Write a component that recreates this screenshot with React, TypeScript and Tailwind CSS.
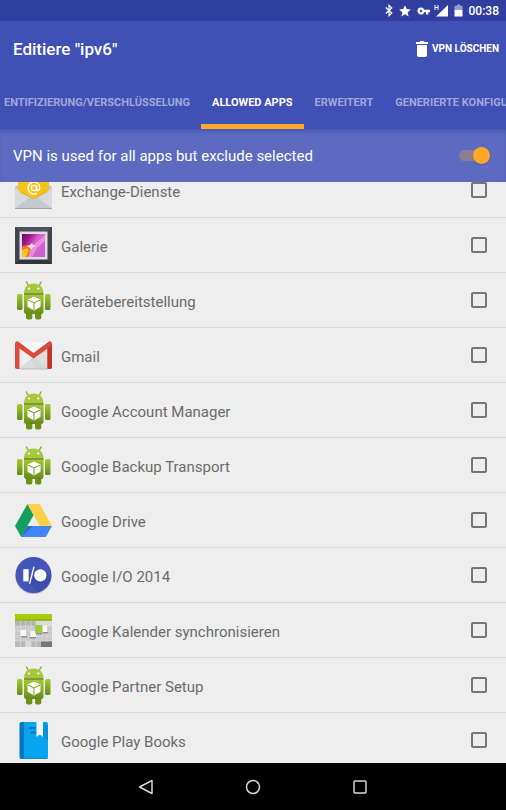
import type { ReactNode } from "react";
import clsx from "clsx";

function MailIcon() {
  return (
    <svg viewBox="0 0 37 37" className="size-[37px]">
      <path d="M0 15L18.500 3 37 15v20H0z" fill="#c3c4cc" />
      <path d="M0 16l18.500 11L37 16v20.500H0z" fill="#d9d9e0" />
      <path d="M3 6h31v12.500L18.500 27 3 18.500z" fill="#fbc219" />
      <path d="M5 19.600l13.500 7.400L32 19.600" fill="none" stroke="#e8a90c" />
      <circle cx="19" cy="16" r="2.600" fill="none" stroke="#fff" strokeWidth="1.400" />
      <path d="M21.700 13.500v3.600c0 2.400 3 1.500 3-1.600 0-3.600-2.700-5.400-5.700-5.400a6 6 0 1 0 3 11.200" fill="none" stroke="#fff" strokeWidth="1.400" />
      <path d="M0 36.500L15 25l3.500 2.500L22 25l15 11.500z" fill="#c6c7d1" />
      <path d="M0 36h37v1H0z" fill="#a4a5ae" />
    </svg>
  );
}

function GalleryIcon() {
  return (
    <svg viewBox="0 0 37 37" className="size-[37px]">
      <defs>
        <linearGradient id="photo" x1="0" y1="0" x2="1" y2=".6">
          <stop offset="0" stopColor="#5f0a6b" />
          <stop offset=".3" stopColor="#a3198c" />
          <stop offset=".6" stopColor="#dc62cf" />
          <stop offset="1" stopColor="#c961cd" />
        </linearGradient>
      </defs>
      <path d="M0 0h37v37H0z" fill="#42444d" />
      <path d="M0 0h37l-4 4H4z" fill="#50525b" />
      <path d="M0 37h37l-4-4H4z" fill="#34363d" />
      <path d="M4.500 4.500h28v28h-28z" fill="#dedee0" />
      <path d="M7 7h23v23H7z" fill="url(#photo)" />
      <path d="M12 30l2-8 7-6 9-8v6l-8 7-5 9z" fill="#f29ae6" opacity=".75" />
      <path d="M7 19l7-1 2 4-3 8H7z" fill="#f4702a" />
      <path d="M7 23l5-2 2 2-3 7H7z" fill="#ffc021" />
      <path d="M12 19l3-1 2-2 1 2 4 1-4 1-2 3-1-2z" fill="#ffe4d5" />
    </svg>
  );
}

function AndroidIcon() {
  return (
    <svg viewBox="0 0 37 40" className="h-10 w-[37px]">
      <defs>
        <linearGradient id="droid" x1="0" y1="0" x2="0" y2="1">
          <stop offset="0" stopColor="#a6c832" />
          <stop offset=".5" stopColor="#86ac26" />
          <stop offset="1" stopColor="#658a1c" />
        </linearGradient>
      </defs>
      <path d="M13 5l-1.500-3M24.500 5L26 2" stroke="#8aae29" strokeWidth="1.400" strokeLinecap="round" />
      <path d="M9 13.500C9 7 13 3.500 18.700 3.500s9.800 3.500 9.800 10z" fill="#a6c83a" />
      <circle cx="14" cy="8.500" r="1.100" fill="#fff" />
      <circle cx="23.300" cy="8.500" r="1.100" fill="#fff" />
      <rect x="2" y="14" width="5.500" height="16" rx="1.500" fill="url(#droid)" />
      <rect x="30" y="14" width="5.500" height="16" rx="1.500" fill="url(#droid)" />
      <rect x="11" y="29" width="6.300" height="10.500" rx="2" fill="#6d9116" />
      <rect x="20" y="29" width="6.300" height="10.500" rx="2" fill="#6d9116" />
      <path d="M9 14.500h19.500v17.200a2.300 2.300 0 0 1-2.300 2.300H11.300A2.300 2.300 0 0 1 9 31.700z" fill="url(#droid)" />
      <path d="M9 14h19.500" stroke="#4c6b0c" strokeWidth="1.200" />
      <path d="M19 16.500l6.500 3v7.200L19 30.500l-6.500-3.800v-7.200z" fill="#fff" />
      <path d="M13 20l6 3 6-3M19 23v7" fill="none" stroke="#84a62b" strokeWidth="1.100" />
    </svg>
  );
}

function GmailIcon() {
  return (
    <svg viewBox="0 0 37 29" className="h-[29px] w-[37px]">
      <path d="M2 1h33v27H2z" fill="#eeeeee" />
      <path d="M4 28l14.500-13L33 28z" fill="#dcdcdc" />
      <path d="M4 1h29L18.500 13z" fill="#f7f7f7" />
      <path d="M33 5v23H20L16 15z" fill="#d2d2d2" opacity=".6" />
      <path d="M0 3C0 1 1.500 0 3 .500L18.500 12 34 .500c1.500-.5 3 .5 3 2.500v23a2 2 0 0 1-2 2h-2.500V7.500L18.500 17.500 4.500 7.500V28H2a2 2 0 0 1-2-2z" fill="#dc4a3e" />
      <path d="M32.500 7.500L37 3v23a2 2 0 0 1-2 2h-2.500z" fill="#c2352b" />
      <path d="M4.500 28h28" stroke="#b9b9b9" />
    </svg>
  );
}

function DriveIcon() {
  return (
    <svg viewBox="0 0 37 33" className="h-[33px] w-[37px]">
      <path d="M12.500 0L0 22l6.200 11L18.700 11z" fill="#159f5c" />
      <path d="M12.500 0h12.200L37 22H24.800z" fill="#ffd046" />
      <path d="M12.500 22H37l-6.200 11H6.200z" fill="#4285f4" />
      <path d="M12.500 22L6.200 33 18 22z" fill="#316bd0" />
    </svg>
  );
}

function IoIcon() {
  return (
    <svg viewBox="0 0 38 39" className="h-[39px] w-[38px]">
      <circle cx="19" cy="20" r="18.500" fill="#b9b9bd" />
      <circle cx="19" cy="19" r="18.500" fill="#4355b9" />
      <path d="M14 25l10 12 9-6 4-10-6-6z" fill="#3d4dac" />
      <path d="M8.500 13H14v12.500H8.500z" fill="#fff" />
      <circle cx="26" cy="19.300" r="6.300" fill="#fff" />
      <path d="M19.500 10.500L15 28" stroke="#fff" strokeWidth="1.300" />
    </svg>
  );
}

function CalendarIcon() {
  return (
    <svg viewBox="0 0 37 33" className="h-[33px] w-[37px]">
      <path d="M0 0h37v33H0z" fill="#cacaca" />
      <path d="M0 7h37v5H0z" fill="#b2b2b2" />
      <path d="M21 7h16v5H21z" fill="#dcdcdc" />
      <path d="M0 27h37v6H0z" fill="#bababa" />
      <path d="M11 27h5v6h-5z" fill="#dadada" />
      <path d="M5.500 7v26M10.500 7v26M16 7v26M21 7v26M26.500 7v26M32 7v26M0 12h37M0 17h37M0 22h37M0 27h37" stroke="#dedede" strokeWidth=".6" />
      <path d="M26 27.500h11V33H26z" fill="#757575" />
      <path d="M0 0h37v6.500H0z" fill="#a9cb0f" />
      <path d="M0 5.500h37v1H0z" fill="#86a40a" />
      <path d="M6 22h6v1.500H6zM15 23h6v1.500h-6zM28 18h5v1.500h-5zM20 19h7v1.500h-7z" fill="#777" opacity=".7" />
      <path d="M5.500 16H11v6H5.500zM15.500 17H21v6h-5.500zM27 11.500h5V18h-5z" fill="#f8f8f8" />
      <path d="M20 11h7.500v8H20z" fill="#9fcb3f" />
    </svg>
  );
}

function BookIcon() {
  return (
    <svg viewBox="0 0 37 37" className="size-[37px]">
      <path d="M4.500 2a2 2 0 0 1 2-2H9v36.500H6.500a2 2 0 0 1-2-2z" fill="#0277bd" />
      <path d="M9 0h22.500A1.500 1.500 0 0 1 33 1.500V35a1.500 1.500 0 0 1-1.500 1.500H9z" fill="#08a4ef" />
      <path d="M14 6h7M16 10.500h5" stroke="#0277bd" strokeWidth="2" />
      <path d="M28 14l5 5V4l-5-4z" fill="#0693dc" />
      <path d="M21.500 0H28v15l-3.200-2.500-3.300 2.500z" fill="#f4f4f4" />
      <path d="M5 36.300h27.500" stroke="#0277bd" />
    </svg>
  );
}

const apps: { name: string; icon: ReactNode }[] = [
  { name: "Exchange-Dienste", icon: <MailIcon /> },
  { name: "Galerie", icon: <GalleryIcon /> },
  { name: "Gerätebereitstellung", icon: <AndroidIcon /> },
  { name: "Gmail", icon: <GmailIcon /> },
  { name: "Google Account Manager", icon: <AndroidIcon /> },
  { name: "Google Backup Transport", icon: <AndroidIcon /> },
  { name: "Google Drive", icon: <DriveIcon /> },
  { name: "Google I/O 2014", icon: <IoIcon /> },
  { name: "Google Kalender synchronisieren", icon: <CalendarIcon /> },
  { name: "Google Partner Setup", icon: <AndroidIcon /> },
  { name: "Google Play Books", icon: <BookIcon /> },
];

const tabs = ["ENTIFIZIERUNG/VERSCHLÜSSELUNG", "ALLOWED APPS", "ERWEITERT", "GENERIERTE KONFIGU"];

function StatusBar() {
  return (
    <div className="flex h-[21px] shrink-0 items-center justify-end bg-[#303f9f] pr-[7px] text-white">
      <svg viewBox="0 0 8 13" className="mr-[6px] h-[13px] w-2" fill="none" stroke="currentColor" strokeWidth="1.200">
        <path d="M.8 3.500l6 5.500L4 11.700V1.300L6.800 4l-6 5.500" />
      </svg>
      <svg viewBox="0 0 12 12" className="mr-[6px] size-3" fill="currentColor">
        <path d="M6 .200l1.700 3.900 4.200.4-3.200 2.800.9 4.200L6 9.300l-3.600 2.200.9-4.200L.1 4.500l4.200-.4z" />
      </svg>
      <svg viewBox="0 0 13 8" className="mr-1 h-2 w-[13px]" fill="currentColor">
        <path fillRule="evenodd" d="M4 .500a3.500 3.500 0 1 0 3.300 4.700H9V7.500h2.300V5.200H13V2.800H7.300A3.500 3.500 0 0 0 4 .500zM4 2.800a1.200 1.200 0 1 1 0 2.400 1.200 1.200 0 0 1 0-2.400z" />
      </svg>
      <svg viewBox="0 0 14 13" className="mr-[6px] h-[13px] w-[14px]" fill="currentColor">
        <path d="M14 1v11.500H2z" />
        <path d="M1 1v5M4 1v5M1 3.500h3" fill="none" stroke="currentColor" />
      </svg>
      <svg viewBox="0 0 9 13" className="mr-[6px] h-[13px] w-[9px]" fill="currentColor">
        <path d="M3 .500h3v1.200h2.500v4.800h-8V1.700H3z" opacity=".5" />
        <path d="M.500 6h8v6.500h-8z" />
      </svg>
      <span className="text-[12px] leading-4 font-medium">00:38</span>
    </div>
  );
}

function Toolbar() {
  return (
    <div className="flex h-[55px] shrink-0 items-center justify-between pr-[7px] pl-[13px] text-white">
      <h1 className="text-[17px] leading-5 font-medium">Editiere &quot;ipv6&quot;</h1>
      <button type="button" className="flex items-center gap-1 text-[10px] leading-4 font-bold">
        <svg viewBox="0 0 12 16" className="h-4 w-3" fill="currentColor">
          <path d="M0 1h3.500l1-1h3l1 1H12v2H0zM1 4h10v10.200a1.800 1.800 0 0 1-1.800 1.800H2.800A1.800 1.800 0 0 1 1 14.200z" />
        </svg>
        VPN LÖSCHEN
      </button>
    </div>
  );
}

function TabBar() {
  return (
    <div role="tablist" className="flex h-[53px] shrink-0 overflow-hidden">
      {tabs.map((tab, i) => (
        <button
          key={tab}
          type="button"
          role="tab"
          aria-selected={i === 1}
          className={clsx(
            "shrink-0 border-y-5 border-t-transparent text-[11px] leading-4 font-bold whitespace-nowrap",
            i === 0 ? "pr-[11px] pl-1" : "px-[11px]",
            i === 1 ? "border-b-[#ffa726] text-white" : "border-b-transparent text-[#a0a8db]",
          )}
        >
          {tab}
        </button>
      ))}
    </div>
  );
}

function ExcludeSwitch() {
  return (
    <label className="flex h-[53px] shrink-0 items-center justify-between bg-[#5c6bc0] pr-4 pl-[13px] text-[15px] leading-5 text-white shadow-[inset_0_4px_4px_-2px_#303f9f80]">
      VPN is used for all apps but exclude selected
      <input
        type="checkbox"
        role="switch"
        defaultChecked
        className="flex h-[11px] w-[31px] appearance-none items-center rounded-full bg-[#8f7d91] after:ml-auto after:size-[17px] after:shrink-0 after:rounded-full after:bg-[#ffa726] after:shadow-sm after:content-['']"
      />
    </label>
  );
}

function AppRow({ name, icon }: { name: string; icon: ReactNode }) {
  return (
    <li className="h-[55px] border-b border-[#dadada]">
      <label className="flex h-full items-center pr-[19px] pl-[15px]">
        <span className="flex w-[37px] shrink-0 justify-center">{icon}</span>
        <span className="ml-[9px] flex-1 pt-1 text-[15px] leading-5 text-[#6b6b6b]">{name}</span>
        <input type="checkbox" className="size-4 appearance-none rounded-[2px] border-2 border-[#757575]" />
      </label>
    </li>
  );
}

function NavBar() {
  return (
    <nav className="flex h-[47px] shrink-0 items-center justify-center gap-[91px] bg-black text-[#d6d6d6]">
      <button type="button" aria-label="Zurück">
        <svg viewBox="0 0 16 16" className="size-4" fill="none" stroke="currentColor" strokeWidth="1.500" strokeLinejoin="round">
          <path d="M14 1.500v13L1.500 8z" />
        </svg>
      </button>
      <button type="button" aria-label="Startseite">
        <svg viewBox="0 0 16 16" className="size-4" fill="none" stroke="currentColor" strokeWidth="1.500">
          <circle cx="8" cy="8" r="6.500" />
        </svg>
      </button>
      <button type="button" aria-label="Übersicht">
        <svg viewBox="0 0 16 16" className="size-4" fill="none" stroke="currentColor" strokeWidth="1.500">
          <rect x="2" y="2" width="12" height="12" rx="1" />
        </svg>
      </button>
    </nav>
  );
}

export default function App() {
  return (
    <div className="flex h-screen flex-col overflow-hidden bg-[#eeeeee] font-[Roboto,sans-serif]">
      <StatusBar />
      <header className="shrink-0 bg-[#3f51b5]">
        <Toolbar />
        <TabBar />
      </header>
      <ExcludeSwitch />
      <main className="min-h-0 flex-1 overflow-hidden">
        <ul className="-mt-[19px]">
          {apps.map((app) => (
            <AppRow key={app.name} {...app} />
          ))}
        </ul>
      </main>
      <NavBar />
    </div>
  );
}
